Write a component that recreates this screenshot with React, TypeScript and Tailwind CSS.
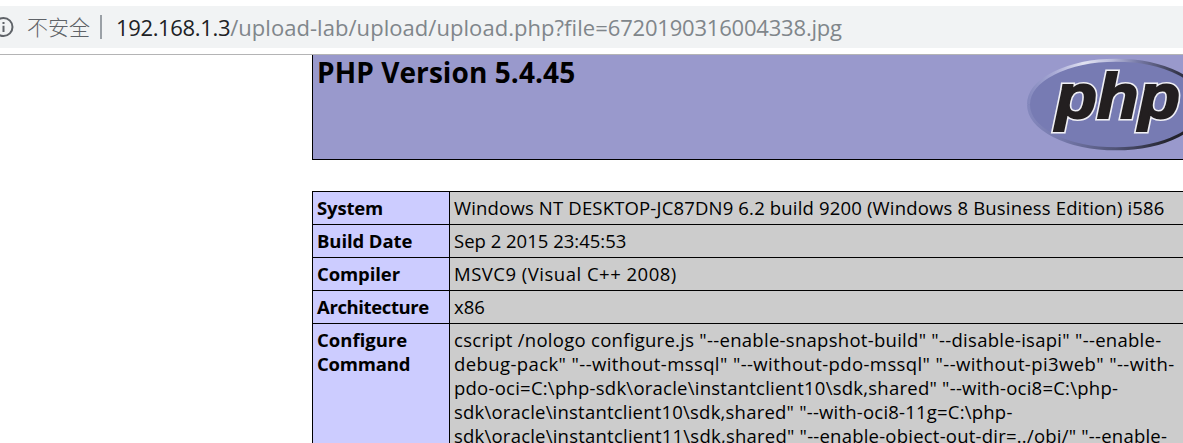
import React from "react";

type Line = { text: string; tracking: string };
type Row = { label: Line[]; value: Line[] };

const rows: Row[] = [
  {
    label: [{ text: "System", tracking: "tracking-[-0.15px]" }],
    value: [
      {
        text: "Windows NT DESKTOP-JC87DN9 6.2 build 9200 (Windows 8 Business Edition) i586",
        tracking: "tracking-[0.17px]",
      },
    ],
  },
  {
    label: [{ text: "Build Date", tracking: "tracking-[-0.1px]" }],
    value: [{ text: "Sep 2 2015 23:45:53", tracking: "tracking-[0px]" }],
  },
  {
    label: [{ text: "Compiler", tracking: "tracking-[-0.1px]" }],
    value: [{ text: "MSVC9 (Visual C++ 2008)", tracking: "tracking-[0.5px]" }],
  },
  {
    label: [{ text: "Architecture", tracking: "tracking-[-0.38px]" }],
    value: [{ text: "x86", tracking: "tracking-[0px]" }],
  },
  {
    label: [
      { text: "Configure", tracking: "tracking-[0px]" },
      { text: "Command", tracking: "tracking-[-0.2px]" },
    ],
    value: [
      {
        text: 'cscript /nologo configure.js "--enable-snapshot-build" "--disable-isapi" "--enable-',
        tracking: "tracking-[0.28px]",
      },
      {
        text: 'debug-pack" "--without-mssql" "--without-pdo-mssql" "--without-pi3web" "--with-',
        tracking: "tracking-[0.4px]",
      },
      {
        text: 'pdo-oci=C:\\php-sdk\\oracle\\instantclient10\\sdk,shared" "--with-oci8=C:\\php-',
        tracking: "tracking-[0.24px]",
      },
      {
        text: 'sdk\\oracle\\instantclient10\\sdk,shared" "--with-oci8-11g=C:\\php-',
        tracking: "tracking-[0.21px]",
      },
      {
        text: 'sdk\\oracle\\instantclient11\\sdk,shared" "--enable-object-out-dir=../obj/" "--enable-',
        tracking: "tracking-[0.22px]",
      },
    ],
  },
];

function AddressBar() {
  return (
    <header className="h-[55px] shrink-0 border-b border-[#b4b4b5] bg-white pt-[6px]">
      <div className="flex h-[42px] items-center overflow-hidden bg-[#f1f3f4] whitespace-nowrap">
        <svg className="h-5 w-[14px] shrink-0" viewBox="0 0 14 20" fill="none">
          <circle cx="3.5" cy="10" r="9" stroke="#5f6368" strokeWidth="2" />
          <path d="M2.5 5h2v2h-2zM2.5 8.8h2V15h-2z" fill="#5f6368" />
        </svg>
        <span className="ml-[13px] w-[64px] font-['Noto_Sans_CJK_SC',sans-serif] text-[21px] leading-[38px] font-light text-[#5f6368] pb-[2px]">
          不安全
        </span>
        <span className="ml-[9px] h-6 w-[2px] bg-[#9aa0a6]" />
        <span className="ml-[14px] text-[22px] leading-[42px] text-[#202124]">
          <span className="tracking-[-0.35px]">192.168.1.3</span>
          <span className="tracking-[0.05px] text-[#80868b]">/upload-lab/upload/upload.php?file=</span>
          <span className="tracking-[-0.2px] text-[#80868b]">6720190316004338.jpg</span>
        </span>
      </div>
    </header>
  );
}

function PhpLogo() {
  return (
    <svg className="h-[100px] w-[180px] shrink-0" viewBox="0 0 180 100">
      <defs>
        <linearGradient id="rimTop" gradientUnits="userSpaceOnUse" x1="2" y1="0" x2="178" y2="0">
          <stop offset="0" stopColor="#8488bd" />
          <stop offset="0.15" stopColor="#a9abd6" />
          <stop offset="0.32" stopColor="#e2e3f2" />
          <stop offset="0.48" stopColor="#b9bbdb" />
          <stop offset="0.62" stopColor="#787ba8" />
          <stop offset="0.85" stopColor="#35364a" />
          <stop offset="1" stopColor="#1c1c24" />
        </linearGradient>
        <linearGradient id="rimBottom" gradientUnits="userSpaceOnUse" x1="2" y1="0" x2="178" y2="0">
          <stop offset="0" stopColor="#8488bd" />
          <stop offset="0.2" stopColor="#7478aa" />
          <stop offset="0.5" stopColor="#505376" />
          <stop offset="0.8" stopColor="#24242e" />
          <stop offset="1" stopColor="#1c1c24" />
        </linearGradient>
      </defs>
      <ellipse cx="90" cy="49.5" rx="88" ry="44.8" fill="#777bb3" />
      <path d="M2.5 49.5a87.5 44.3 0 0 1 175 0" fill="none" stroke="url(#rimTop)" strokeWidth="3" />
      <path d="M2.5 49.5a87.5 44.3 0 0 0 175 0" fill="none" stroke="url(#rimBottom)" strokeWidth="3" />
      <g
        transform="translate(29.5 63) scale(1.06 0.98)"
        fontFamily="Liberation Sans, sans-serif"
        fontSize="64"
        fontWeight="700"
        fontStyle="italic"
        strokeLinejoin="miter"
      >
        <text x="0" y="0" fill="#f0f0f5" stroke="#f0f0f5" strokeWidth="5">
          php
        </text>
        <text x="0" y="0" fill="#231f20" stroke="#231f20" strokeWidth="2">
          php
        </text>
      </g>
    </svg>
  );
}

function Lines({ lines }: { lines: Line[] }) {
  return (
    <>
      {lines.map((line) => (
        <div key={line.text} className={`leading-6 whitespace-nowrap ${line.tracking}`}>
          {line.text}
        </div>
      ))}
    </>
  );
}

export default function App() {
  return (
    <div className="flex h-[443px] w-full flex-col overflow-hidden bg-white font-['Open_Sans','Noto_Sans_CJK_SC',sans-serif] text-black">
      <AddressBar />
      <main className="ml-[312px] min-h-0 flex-1 overflow-hidden">
        <section className="flex h-[105px] items-start justify-between overflow-hidden border-b border-l border-black bg-[#9999cc] pl-[4px]">
          <h1 className="text-[28px] leading-[35px] font-bold tracking-[0.08px] whitespace-nowrap">PHP Version 5.4.45</h1>
          <div className="w-[157px] shrink-0 overflow-hidden">
            <PhpLogo />
          </div>
        </section>
        <section className="mt-[31px] border-l border-black text-[18.5px]">
          {rows.map((row) => (
            <div key={row.label[0].text} className="flex border-t border-black">
              <div className="w-[137px] shrink-0 border-r border-black bg-[#ccccff] px-[4px] py-[4px] font-bold">
                <Lines lines={row.label} />
              </div>
              <div className="min-w-0 flex-1 overflow-hidden bg-[#cccccc] px-[4px] py-[4px]">
                <Lines lines={row.value} />
              </div>
            </div>
          ))}
        </section>
      </main>
    </div>
  );
}
